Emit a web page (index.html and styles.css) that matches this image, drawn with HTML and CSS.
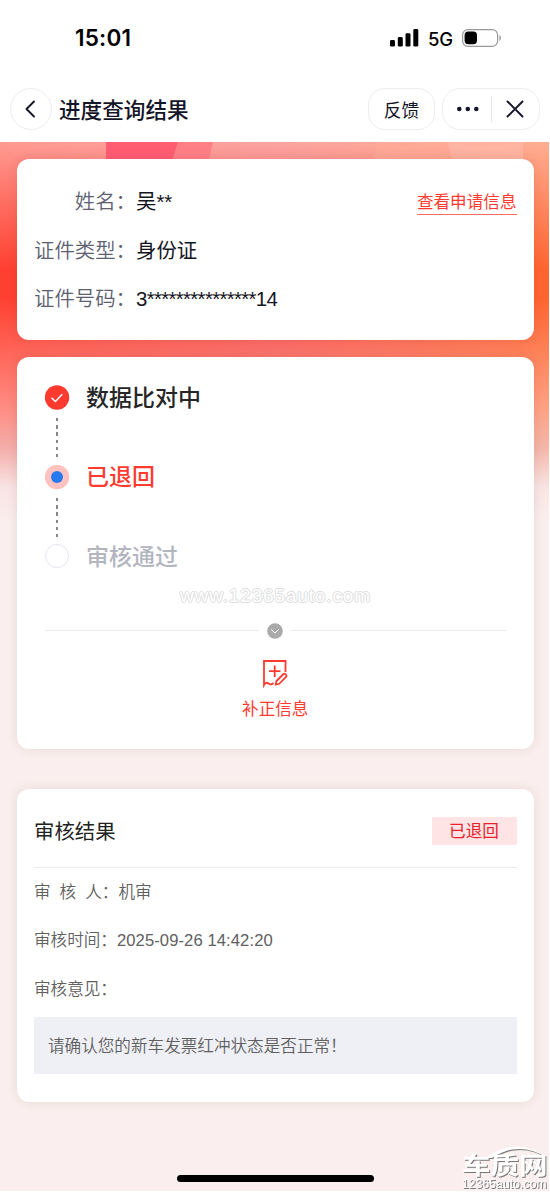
FILE: index.html
```html
<!DOCTYPE html>
<html lang="zh-CN">
<head>
<meta charset="utf-8">
<title>进度查询结果</title>
<link rel="stylesheet" href="styles.css">
</head>
<body>
<div class="phone">
  <header class="top">
    <div class="status">
      <span class="time">15:01</span>
      <div class="signals">
        <svg class="bars" width="29" height="18" viewBox="0 0 29 18"><rect x="0" y="11" width="5" height="6.6" rx="1.4"/><rect x="7.8" y="8" width="5" height="9.6" rx="1.4"/><rect x="15.5" y="4.2" width="5" height="13.4" rx="1.4"/><rect x="23.3" y="0" width="5" height="17.6" rx="1.4"/></svg>
        <span class="net">5G</span>
        <svg width="40" height="18" viewBox="0 0 40 18"><rect x=".6" y=".6" width="35" height="16.8" rx="5.4" fill="none" stroke="#999" stroke-width="1.2"/><rect x="2.6" y="2.6" width="12.4" height="12.6" rx="3.6"/><path d="M37.400 6v6c2-.8 2-5.200 0-6z" fill="#999"/></svg>
      </div>
    </div>
    <nav class="nav">
      <div class="back"><svg width="12" height="18" viewBox="0 0 12 18"><path d="M9 1.500 1.500 9 9 16.500"/></svg></div>
      <h1>进度查询结果</h1>
      <div class="feedback">反馈</div>
      <div class="capsule">
        <svg width="22" height="6" viewBox="0 0 22 6"><circle cx="2.300" cy="3" r="2.300"/><circle cx="10.800" cy="3" r="2.300"/><circle cx="19.300" cy="3" r="2.300"/></svg>
        <i></i>
        <svg class="close" width="18" height="18" viewBox="0 0 18 18"><path d="M1.500 1.500 16.500 16.500M16.500 1.500 1.500 16.500"/></svg>
      </div>
    </nav>
  </header>
  <main>
    <svg class="shapes" width="549" height="17" viewBox="0 0 549 17"><path d="M106 0H178L173 17H106z" fill="#ff5c72"/><path d="M178 0H213L209 17H173z" fill="#ff7f86"/><path d="M377 0H447L452 17H373z" fill="#ffae98" opacity=".45"/><path d="M447 0H523V17H452z" fill="#ffb8a8" opacity=".7"/></svg>
    <section class="card person">
      <dl>
        <dt>姓名：</dt><dd>吴**</dd>
        <dt>证件类型：</dt><dd>身份证</dd>
        <dt>证件号码：</dt><dd class="idno">3***************14</dd>
      </dl>
      <a class="view">查看申请信息</a>
    </section>
    <section class="card progress">
      <ol>
        <li class="done"><svg width="25" height="25" viewBox="0 0 25 25"><circle cx="12" cy="12.500" r="12.200" fill="#ff3b30"/><path d="M6.500 12.700 10.400 16.500 17.300 9.200" fill="none" stroke="#fff" stroke-width="1.500"/></svg>数据比对中</li>
        <li class="line"></li>
        <li class="current"><svg width="25" height="25" viewBox="0 0 25 25"><circle cx="12" cy="12" r="12.200" fill="#ffc2bf"/><circle cx="12" cy="12" r="6" fill="#2878f0"/></svg>已退回</li>
        <li class="line"></li>
        <li class="pending"><svg width="25" height="25" viewBox="0 0 25 25"><circle cx="12" cy="12" r="11.500" fill="#fff" stroke="#e5e5f2"/></svg>审核通过</li>
      </ol>
      <div class="fold"><i></i><svg width="16" height="16" viewBox="0 0 16 16"><circle cx="8" cy="8" r="7.800" fill="#aaa"/><path d="m4.200 6.500 3.800 3.500 3.800-3.500" fill="none" stroke="#fff"/></svg><i></i></div>
      <a class="amend">
        <svg width="26" height="28" viewBox="0 0 26 28" fill="none" stroke="#ff3b30" stroke-width="1.800"><path d="M23.500 12V1H2V25Q4 21.500 6.500 23.500T11.500 23M12.700 5.500V17M7 11.200H18.500M14.500 21 21.500 14Q22.500 13.300 23.600 14.300T24.500 16.400L17.300 23.800 13.800 24.600z"/></svg>
        补正信息
      </a>
      <div class="watermark">www.12365auto.com</div>
    </section>
    <section class="card result">
      <div class="heading"><h2>审核结果</h2><span class="tag">已退回</span></div>
      <p class="row auditor"><span>审</span><span>核</span><span>人：</span><b>机审</b></p>
      <p class="row">审核时间：<b class="date">2025-09-26 14:42:20</b></p>
      <p class="row">审核意见：</p>
      <p class="opinion">请确认您的新车发票红冲状态是否正常！</p>
    </section>
  </main>
  <div class="home"></div>
  <div class="brand">
    <svg width="88" height="16" viewBox="0 0 88 16"><path d="M24 13Q54-10 86 13Q56-5 30 13z"/></svg>
    <strong>车质网</strong><span>12365auto.com</span>
  </div>
</div>
</body>
</html>
```

FILE: styles.css
```css
* { box-sizing: border-box; margin: 0; padding: 0; }
body { background: #fff; font-family: "Liberation Sans", "Noto Sans CJK SC", sans-serif; color: #111; }
.phone { position: relative; width: 549px; height: 1191px; overflow: hidden; background: #faefee; }
.top { height: 142px; background: #fff; padding-top: 20px; }
.status { display: flex; justify-content: space-between; align-items: center; height: 36px; padding: 0 47px 0 75px; }
.time { font: 600 22.500px/36px Inter, sans-serif; letter-spacing: .2px; color: #000; }
.signals { display: flex; align-items: center; }
.net { font: 500 18.500px/36px Inter, sans-serif; color: #000; width: 42px; padding: 1px 0 0 8px; letter-spacing: -.3px; }
.bars { margin-right: 1px; }
.nav { display: flex; align-items: center; padding: 32px 9px 0 10px; }
.back, .feedback, .capsule { height: 42px; border: 1px solid #ededf0; border-radius: 21px; display: flex; align-items: center; justify-content: center; }
.back { width: 42px; }
.back path, .close path { fill: none; stroke: #15152a; stroke-width: 1.900; stroke-linecap: round; stroke-linejoin: round; }
.nav h1 { font-size: 21.600px; line-height: 30px; font-weight: 500; padding-top: 3px; margin-left: 7px; margin-right: auto; color: #15152a; }
.feedback { width: 67px; border-radius: 17px; font-size: 17.800px; color: #15152a; margin-right: 7px; }
.capsule { width: 98px; border-radius: 18px; justify-content: flex-start; padding-left: 14px; fill: #15152a; }
.capsule i { width: 1px; height: 26px; background: #e5e5e8; margin: 0 14px 0 12px; }
main {
  height: 1049px;
  padding: 17px 15.500px 0 17px;
  background:
    linear-gradient(rgba(255,255,255,.48) 0, rgba(255,255,255,.26) 55px, rgba(255,255,255,0) 128px, rgba(255,255,255,0) 155px, rgba(255,255,255,.18) 207px, rgba(255,244,244,.42) 265px, rgba(240,210,210,.74) 305px, rgba(248,234,234,.96) 345px, #faefee 380px) no-repeat 0 0 / 100% 380px,
    linear-gradient(90deg, #ff4030, #f9504a 50%, #ff6530) no-repeat 0 0 / 100% 379px, #faefee;
}
.shapes { position: absolute; left: 0; top: 142px; }
.card { position: relative; background: #fff; border-radius: 12px; box-shadow: 0 0 12px rgba(80,20,20,.1); }
.person { height: 181px; display: flex; justify-content: space-between; align-items: flex-start; padding: 19px 17px; }
dl { display: grid; grid-template-columns: 102px auto; grid-auto-rows: 48.500px; line-height: 48.500px; font-size: 20.400px; }
dt { text-align: right; color: #5c6070; font-weight: 350; white-space: nowrap; }
dd { color: #14141e; }
.idno { letter-spacing: -.66px; }
.view { font-size: 16.600px; line-height: 23px; margin-top: 13px; color: #ff3b30; border-bottom: 1px solid #ff6b63; }
.progress { height: 391.500px; margin-top: 17px; padding: 24.500px 28px 0; }
ol { list-style: none; }
ol li { display: flex; align-items: center; gap: 16px; height: 32px; font-size: 23px; line-height: 32px; font-weight: 500; }
.done { color: #262628; }
.current { color: #ff3b30; }
.pending { color: #b3b5bf; }
ol .line { height: 39px; margin: 4.500px 0 4px 11px; width: 2px; background: repeating-linear-gradient(#888 0 3.500px, transparent 3.500px 7.200px); }
.fold { display: flex; align-items: center; gap: 8px; height: 16px; margin: 50px 0 22px; }
.fold i { flex: 1; height: 1px; background: #ebebeb; }
.amend { display: flex; flex-direction: column; align-items: center; font-size: 16.600px; line-height: 24px; gap: 9px; color: #ff3b30; }
.amend svg { margin-top: -1px; margin-bottom: 1px; }
.watermark { position: absolute; left: 163px; top: 227px; font-size: 19px; font-weight: 400; line-height: 24px; letter-spacing: .85px; color: #fff; text-shadow: 1px 0 #ddd, -1px 0 #ddd, 0 1px #ddd, 0 -1px #ddd; white-space: nowrap; }
.result { height: 313px; margin-top: 40px; padding: 0 17px; font-size: 16.600px; color: #606060; }
.heading { height: 79px; display: flex; align-items: center; justify-content: space-between; border-bottom: 1px solid #ebebf2; padding-top: 7px; }
h2 { font-size: 20.400px; font-weight: 400; color: #222; margin-top: -3px; }
.tag { width: 85px; height: 28px; line-height: 29px; text-align: center; background: #ffe4e6; color: #e8202a; border-radius: 1px; }
.row { height: 48.600px; line-height: 50px; font-weight: 350; display: flex; }
.row b { font-weight: inherit; }
.date { letter-spacing: .09px; }
.auditor { gap: 9px; }
.auditor b { margin-left: -9px; }
.opinion { height: 56.500px; line-height: 59px; margin-top: 4px; padding-left: 14px; background: #eff0f6; font-weight: 350; }
.home { position: absolute; left: 177px; top: 1175px; width: 197px; height: 7px; border-radius: 4px; background: #000; }
.brand { position: absolute; left: 462px; top: 1145px; width: 88px; color: #fff; filter: drop-shadow(1px 1px .7px #777); }
.brand svg { position: absolute; left: 0; top: 0; fill: #fff; }
.brand strong { display: block; margin-top: 8px; font-size: 28.500px; font-weight: 700; line-height: 26px; white-space: nowrap; transform: scaleY(.82); }
.brand span { display: block; margin-top: -1px; font-size: 12px; line-height: 12px; letter-spacing: .15px; }
```
